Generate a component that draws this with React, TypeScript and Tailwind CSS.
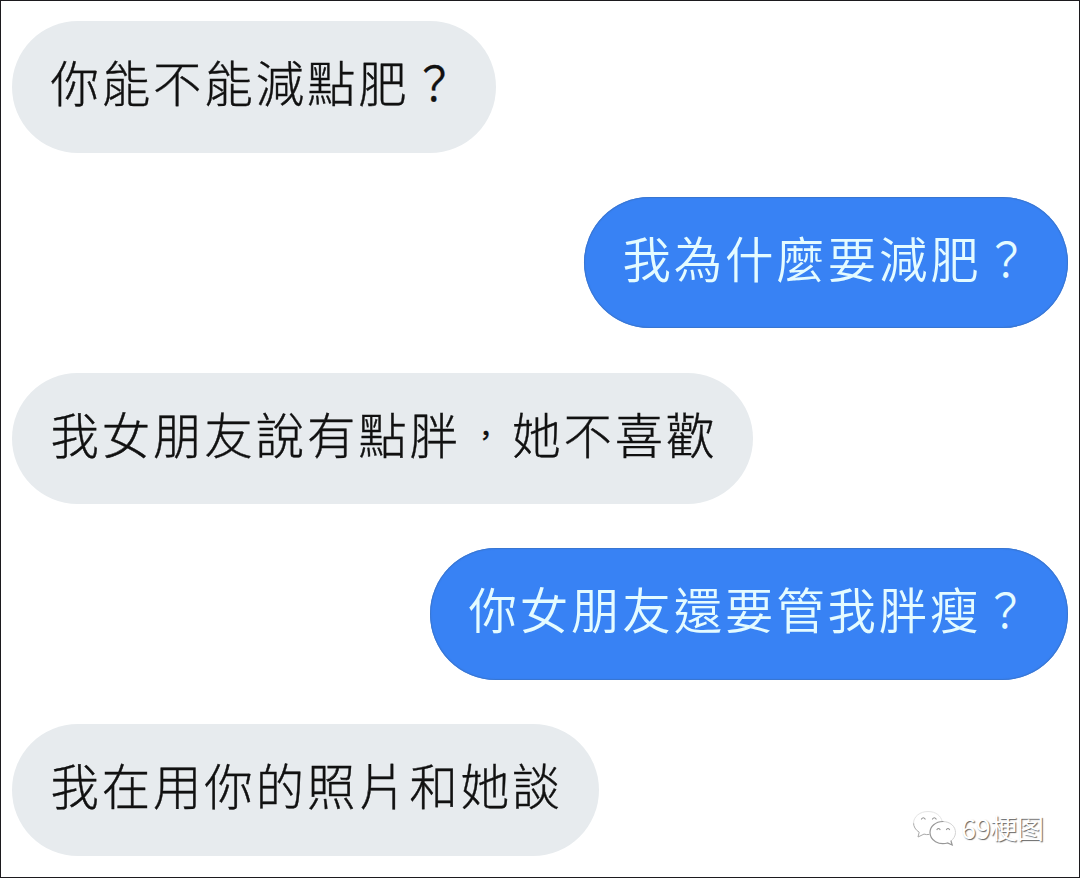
interface Message {
  id: number;
  text: string;
  mine: boolean;
  width: string;
}

const messages: Message[] = [
  { id: 1, text: "你能不能減點肥？", mine: false, width: "w-[484px]" },
  { id: 2, text: "我為什麼要減肥？", mine: true, width: "w-[484px]" },
  { id: 3, text: "我女朋友說有點胖，她不喜歡", mine: false, width: "w-[741px]" },
  { id: 4, text: "你女朋友還要管我胖瘦？", mine: true, width: "w-[638px]" },
  { id: 5, text: "我在用你的照片和她談", mine: false, width: "w-[587px]" },
];

// the punctuation is narrower than the characters around it
const renderText = (text: string) =>
  text.split(/([？，])/).map((part, index) => {
    if (part === "？") {
      return (
        <span key={index} className="inline-block scale-x-[0.88] scale-y-[0.97] font-[350]">
          {part}
        </span>
      );
    }
    if (part === "，") {
      return (
        <span key={index} className="inline-block scale-[0.55] font-medium">
          {part}
        </span>
      );
    }
    return part;
  });

const Bubble: React.FC<{ data: Message }> = ({ data }) => {
  return (
    <div
      className={`h-[131.6px] shrink-0 rounded-full pl-[38.5px] pt-[22px] text-[48.4px] leading-[76px] tracking-[2.9px] whitespace-nowrap ${data.width} ${
        data.mine
          ? "self-end bg-[#3882f4] font-[350] text-[#e4fbff] shadow-[inset_0_0_1px_1px_#3975cf]"
          : "bg-[#e7ebee] font-light text-[#111111] [-webkit-text-stroke:0.4px_#111111]"
      }`}
    >
      {renderText(data.text)}
    </div>
  );
};

const Watermark: React.FC = () => {
  return (
    <div className="absolute left-[911px] top-[808px] flex items-center gap-[5px] opacity-90">
      <svg width="44" height="38" viewBox="0 0 44 38" fill="white" strokeLinecap="round">
        <path
          d="M17 25.5c-1.500.3-3.500.1-5-.4L6 28l1.200-4.800C3.500 21 1.500 17.500 1.500 14"
          stroke="#a0a0a0"
        />
        <path d="M1.500 14C1.500 7.500 8 2.500 16 2.500S29 7 30 12" stroke="#e2e2e2" />
        <path
          d="M31 12.500c7.300 0 12.500 5 12.500 11 0 3.500-2 6.500-4.500 8.500"
          stroke="#cfcfcf"
        />
        <path
          d="M39 32l1.200 4-4.700-2c-8.500 2.500-17.500-2.500-17.500-10.500 0-6 5.500-11 13-11"
          stroke="#8c8c8c"
          strokeWidth="1.200"
        />
        <path
          d="M9.500 10q1.800-2.500 3.600 0M20.500 10q1.800-2.500 3.600 0M25 20.500q1.500-2 3 0M34.500 20.500q1.500-2 3 0"
          fill="none"
          stroke="#8a8a8a"
          strokeWidth="1.200"
        />
      </svg>
      <span className="text-[27px] leading-[38px] tracking-[-0.3px] text-white [text-shadow:1px_1px_1px_#555]">
        69梗图
      </span>
    </div>
  );
};

export default function App() {
  return (
    <div className="relative flex h-[878px] w-[1080px] flex-col gap-[44.2px] overflow-hidden border border-[#1c1a1e] bg-white px-[11px] pt-5 font-['Noto_Sans_CJK_TC',sans-serif]">
      {messages.map((message) => (
        <Bubble key={message.id} data={message} />
      ))}
      <Watermark />
    </div>
  );
}
